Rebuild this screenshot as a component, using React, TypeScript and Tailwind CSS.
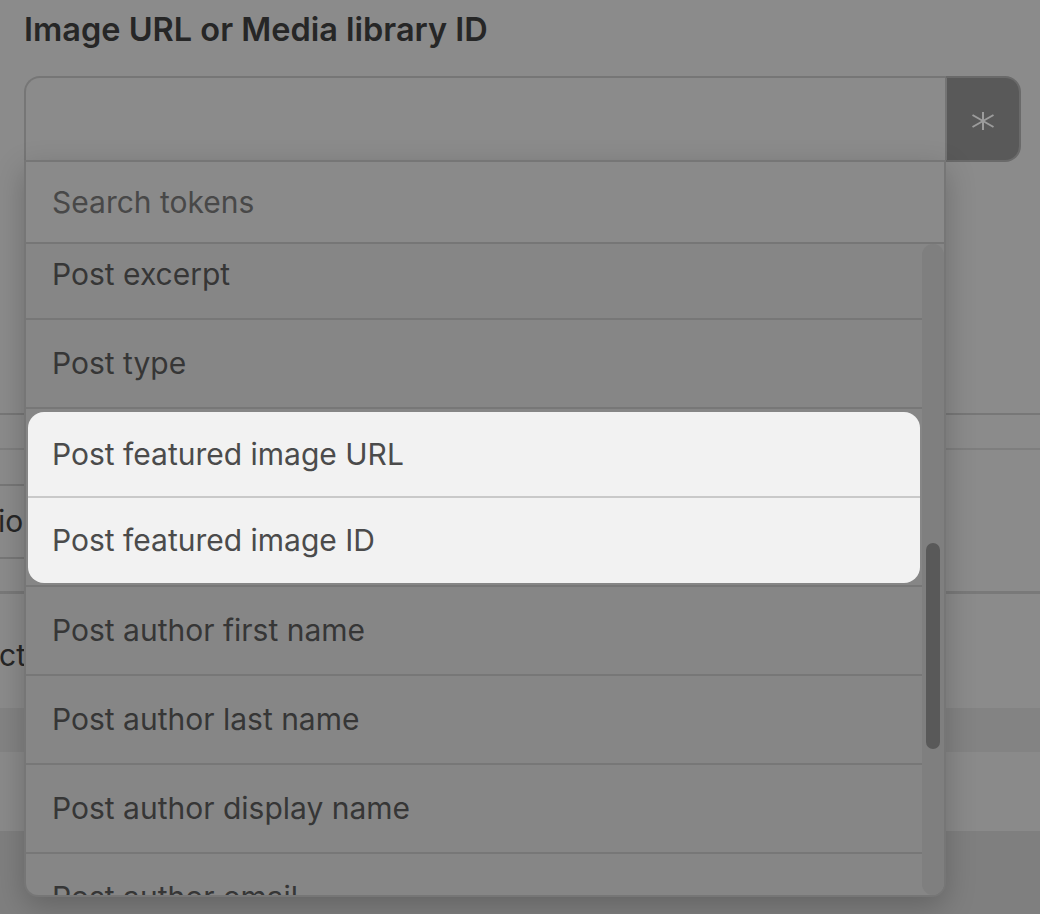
import React from "react";

const rows = [
  "Post excerpt",
  "Post type",
];
const rowsAfter = [
  "Post author first name",
  "Post author last name",
  "Post author display name",
  "Post author email",
];

function Asterisk() {
  return (
    <svg width="24" height="24" viewBox="0 0 24 24" fill="none" stroke="#9c9c9c" strokeWidth="2" strokeLinecap="butt">
      <path d="M12 3 V21" />
      <path d="M1.5 6 L22.5 18" />
      <path d="M1.5 18 L22.5 6" />
    </svg>
  );
}

export default function App() {
  return (
    <div className="relative w-[1040px] h-[914px] overflow-hidden bg-[#8b8b8b] font-[Inter,sans-serif]">
      {/* Label */}
      <div className="px-6 pt-[10px] text-[32.5px] leading-[40px] font-semibold text-[#262626]">
        Image URL or Media library ID
      </div>

      {/* Input with button and popover */}
      <div className="relative z-10 mt-[26px] ml-6 flex w-[997px] h-[86px]">
        <div className="flex-1 rounded-tl-[16px] border-2 border-r-0 border-[#767676] bg-[#8b8b8b]" />
        <div className="w-[76px] flex items-center justify-center pt-[4px] rounded-r-[16px] bg-[#595959] border-2 border-l-[#747474] border-[#6a6a6a]">
          <Asterisk />
        </div>

        {/* Dropdown */}
        <div className="absolute left-0 top-[84px] w-[922px] h-[737px] flex flex-col overflow-hidden rounded-b-[14px] border-2 border-t-0 border-[#767676] bg-[#868686] shadow-[0_10px_30px_rgba(0,0,0,0.22)]">
          <div className="h-[84px] shrink-0 flex items-center pl-[26px] border-t-2 border-b-2 border-[#767676] bg-[#8a8a8a] text-[30px] text-[#484848]">
            Search tokens
          </div>
          <div className="relative flex-1 flex overflow-hidden">
            <div className="flex-1 overflow-hidden">
              <div className="-mt-[13px]">
                {rows.map((r) => (
                  <div key={r} className="h-[89px] flex items-center pl-[26px] border-b-2 border-[#777777] text-[30px] text-[#363636]">
                    {r}
                  </div>
                ))}
                <div className="h-[178px] pt-[3px] pb-[2px] pl-[2px] pr-[2px] border-b-2 border-[#777777]">
                  <div className="h-full flex flex-col rounded-[16px] bg-[#f2f2f2] overflow-hidden">
                    <div className="h-[86px] flex items-center pl-[24px] border-b-2 border-[#c9c9c9] text-[30px] text-[#4b4b4b]">
                      Post featured image URL
                    </div>
                    <div className="flex-1 flex items-center pl-[24px] text-[30px] text-[#4b4b4b]">
                      Post featured image ID
                    </div>
                  </div>
                </div>
                {rowsAfter.map((r) => (
                  <div key={r} className="h-[89px] flex items-center pl-[26px] border-b-2 border-[#777777] text-[30px] text-[#363636]">
                    {r}
                  </div>
                ))}
              </div>
            </div>
            {/* Scrollbar */}
            <div className="w-[22px] shrink-0 rounded-t-[11px] rounded-b-[11px] bg-[#7f7f7f] pt-[299px] flex justify-center">
              <div className="w-[14px] h-[206px] rounded-full bg-[#595959]" />
            </div>
          </div>
        </div>
      </div>

      {/* Background page content beneath the popover */}
      <div className="mt-[251px]">
        <div className="h-[37px] border-t-2 border-b-2 border-t-[#777777] border-b-[#7e7e7e]" />
        <div className="h-[34px]" />
        <div className="w-[400px] h-[75px] flex items-center border-t-2 border-b-2 border-[#777777] text-[30px] text-[#262626] -ml-[2px]">
          io
        </div>
        <div className="h-[35px] border-b-[3px] border-[#797979]" />
        <div className="h-[114px] flex items-center pt-[8px] text-[30px] text-[#262626] -ml-[1px]">
          ct
        </div>
        <div className="h-[44px] bg-[#838383]" />
        <div className="h-[79px] bg-[#8a8a8a]" />
        <div className="h-[90px] bg-[#7f7f7f]" />
      </div>
    </div>
  );
}
